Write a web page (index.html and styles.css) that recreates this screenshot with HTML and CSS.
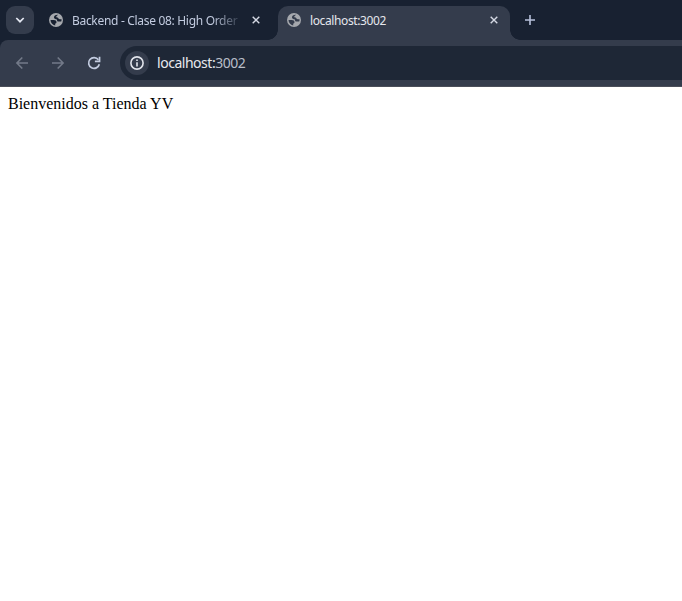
FILE: index.html
```html
<!DOCTYPE html>
<html lang="es">
<head>
<meta charset="utf-8">
<title>localhost:3002</title>
<link rel="stylesheet" href="styles.css">
</head>
<body>
<svg width="0" height="0" class="defs" aria-hidden="true">
  <symbol id="globe" viewBox="0 0 14 14">
    <circle cx="7" cy="7" r="7" fill="currentColor"/>
    <path class="land" d="M9 1.700C8.600 2.700 7.200 2.700 7.200 3.700c0 .9 1.700.4 2 1.300.3.700.6 1.200 1.500 1.200h1.800c.2 1-.1 1.900-.3 2.300H9.700c-1.300 0-1.600-.7-1.700-1.600C7.800 6.100 5 6.400 5 4.300 5 2.500 6.600 1.500 9 1.700zM1.500 7.100h3.300c1.700 0 2.700.9 2.700 2.200 0 .9-.7 1.200-1.300 1.300v1.800C3.500 12 1.600 10 1.500 7.100z"/>
  </symbol>
  <symbol id="close" viewBox="0 0 8 8">
    <path d="M.7.7l6.600 6.600M7.300.7L.7 7.300" fill="none" stroke="currentColor" stroke-width="1.400"/>
  </symbol>
</svg>
<header class="tabstrip">
  <button class="search" aria-label="Buscar pestañas">
    <svg width="10" height="6" viewBox="0 0 10 6"><path d="M1.300 1l3.700 3.700L8.700 1" fill="none" stroke="currentColor" stroke-width="1.700"/></svg>
  </button>
  <div class="tab">
    <svg class="favicon"><use href="#globe"/></svg>
    <span class="title faded">Backend - Clase 08: High Order</span>
    <svg class="close"><use href="#close"/></svg>
  </div>
  <div class="tab active">
    <svg class="favicon"><use href="#globe"/></svg>
    <span class="title">localhost:3002</span>
    <svg class="close"><use href="#close"/></svg>
  </div>
  <svg class="plus" width="10" height="10" viewBox="0 0 10 10"><path d="M5 0v10M0 5h10" stroke="currentColor" stroke-width="1.600"/></svg>
</header>
<nav class="toolbar">
  <svg class="nav" viewBox="0 0 12 12"><path d="M12 6H1.200M6.300.5L.9 6l5.400 5.500" fill="none" stroke="currentColor" stroke-width="1.600"/></svg>
  <svg class="nav" viewBox="0 0 12 12"><path d="M0 6h10.800M5.700.5L11.100 6l-5.400 5.500" fill="none" stroke="currentColor" stroke-width="1.600"/></svg>
  <svg class="nav reload" viewBox="0 0 12 12"><path d="M10.400 2.800A5.400 5.400 0 1 0 11.300 7.200" fill="none" stroke="currentColor" stroke-width="1.700"/><path d="M12.400-.3v5.500H6.900V3.500h3.800V-.3z" fill="currentColor"/></svg>
  <div class="omnibox">
    <span class="info"><svg width="14" height="14" viewBox="0 0 14 14"><circle cx="7" cy="7" r="6.100" fill="none" stroke="currentColor" stroke-width="1.600"/><path d="M7 6.200v4.200M7 3.400V5" stroke="currentColor" stroke-width="1.600"/></svg></span>
    <span class="url"><b>localhost:</b>3002</span>
  </div>
</nav>
<main>Bienvenidos a Tienda YV</main>
</body>
</html>
```
FILE: styles.css
```css
* { box-sizing: border-box; }
body { margin: 0; background: #fff; overflow: hidden; }
svg { display: block; flex: none; }
.defs { position: absolute; }
.tabstrip {
  display: flex;
  height: 48px;
  margin-bottom: -8px;
  padding: 6px 0 8px 6px;
  background: #182131;
  font: 12px "Noto Sans", sans-serif;
  color: #c3cce0;
}
.search {
  display: flex;
  align-items: center;
  justify-content: center;
  width: 28px;
  height: 28px;
  padding: 0;
  border: 0;
  border-radius: 9px;
  background: #343c4c;
  color: #e4e8f2;
}
.tab {
  display: flex;
  align-items: center;
  width: 232px;
  height: 34px;
  padding: 0 12px 6px 9px;
  --back: #182131;
}
.search + .tab { margin-left: 6px; }
.tab.active {
  position: relative;
  margin-left: 6px;
  border-radius: 10px 10px 0 0;
  background: #343c4c;
  color: #e5e7ed;
  --back: #343c4c;
}
.tab.active::before, .tab.active::after {
  content: "";
  position: absolute;
  bottom: 0;
  width: 10px;
  height: 10px;
}
.tab.active::before { left: -10px; background: radial-gradient(circle at 0 0, transparent 9.500px, #343c4c 10px); }
.tab.active::after { right: -10px; background: radial-gradient(circle at 100% 0, transparent 9.500px, #343c4c 10px); }
.favicon { width: 14px; height: 14px; margin-right: 9px; color: #a5a8ad; }
.land { fill: var(--back); }
.title {
  flex: 1;
  height: 20px;
  padding-top: 2px;
  line-height: 18px;
  overflow: hidden;
  white-space: nowrap;
  letter-spacing: -0.38px;
}
.faded { letter-spacing: -0.31px; mask-image: linear-gradient(90deg, #000 140px, transparent 172px); }
.close { width: 8px; height: 8px; color: #d5d9e4; }
.plus { margin: 9px 0 0 15px; color: #b7c1db; }
.toolbar {
  position: relative;
  display: flex;
  align-items: center;
  height: 47px;
  padding-left: 16px;
  border-bottom: 1px solid #4a4e59;
  border-radius: 8px 0 0 0;
  background: #343c4c;
}
.nav { width: 12px; height: 12px; margin-right: 24px; overflow: visible; color: #737a89; }
.reload { margin-right: 20px; color: #c3cce0; }
.omnibox {
  display: flex;
  flex: 1;
  align-items: center;
  height: 34px;
  padding-left: 5px;
  border-radius: 17px 0 0 17px;
  background: #1e2736;
}
.info {
  display: flex;
  align-items: center;
  justify-content: center;
  width: 24px;
  height: 24px;
  margin-right: 8px;
  border-radius: 50%;
  background: #343c4c;
  color: #e1e4eb;
}
.url { margin-bottom: 2px; font: 14px "Noto Sans", sans-serif; letter-spacing: -0.47px; color: #b8bdc8; }
.url b { font-weight: 400; color: #e7e9ee; }
main { padding: 8px; font: 16px "Liberation Serif", serif; color: #000; }
```
